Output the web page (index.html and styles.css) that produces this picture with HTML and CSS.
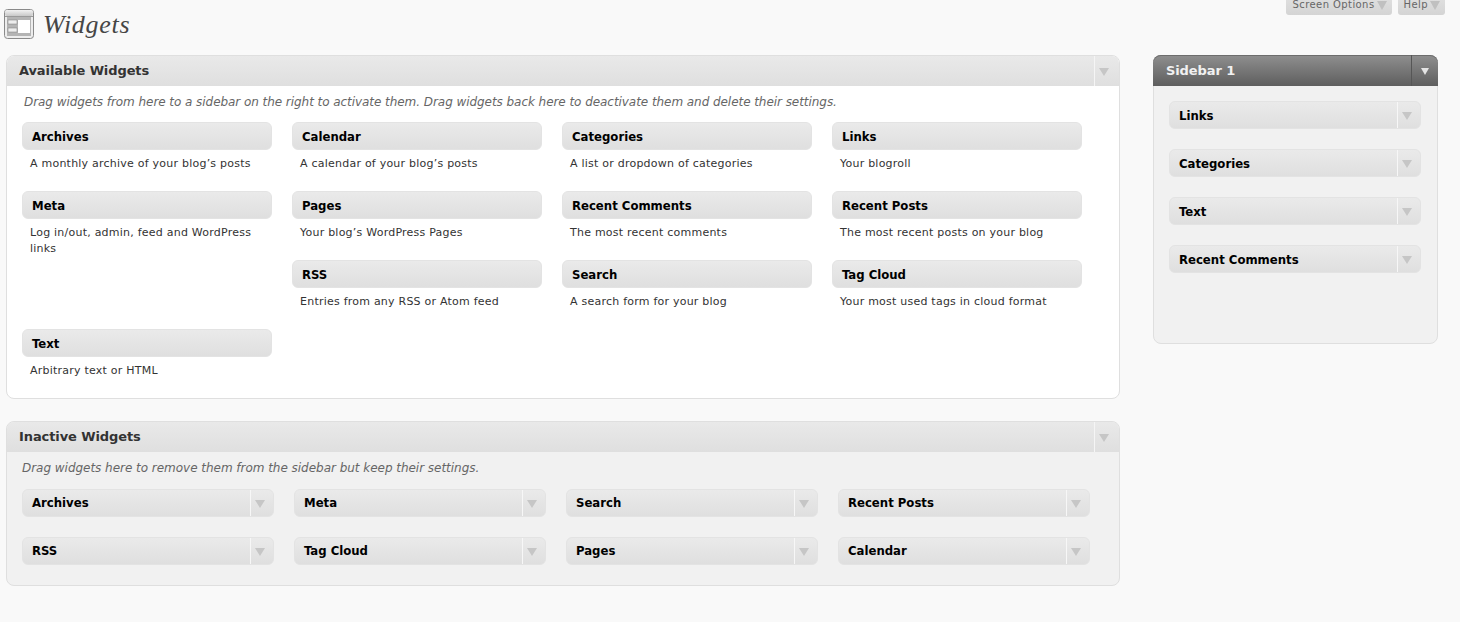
FILE: index.html
```html
<!DOCTYPE html>
<html lang="en">
<head>
<meta charset="utf-8">
<title>Widgets</title>
<link rel="stylesheet" href="styles.css">
</head>
<body>
<div class="screen-meta">
  <div class="tab">Screen Options<span class="tab-arrow"></span></div>
  <div class="tab">Help<span class="tab-arrow"></span></div>
</div>
<header class="page-head">
  <svg class="page-icon" width="30" height="30" viewBox="0 0 30 30">
    <defs>
      <linearGradient id="bar" x1="0" y1="0" x2="0" y2="1"><stop offset="0" stop-color="#f2f2f2"/><stop offset="1" stop-color="#c8c8c8"/></linearGradient>
    </defs>
    <rect x=".5" y=".5" width="29" height="29" rx="3" fill="#ededed" stroke="#8a8a8a"/>
    <rect x="1" y="1" width="28" height="6" rx="2" fill="url(#bar)"/>
    <rect x="1" y="7" width="28" height="1" fill="#9a9a9a"/>
    <rect x="3" y="8" width="24" height="19" fill="#b4b4b4"/>
    <rect x="4" y="11" width="9" height="4" fill="#ededed" stroke="#7d7d7d" stroke-width=".5"/>
    <rect x="4" y="19" width="9" height="4" fill="#ededed" stroke="#7d7d7d" stroke-width=".5"/>
    <rect x="14" y="11" width="12" height="13" fill="#fff"/>
  </svg>
  <h1 class="page-title">Widgets</h1>
</header>
<main class="layout">
  <div class="left-col">
    <section class="panel panel-available">
      <div class="panel-head"><h2 class="panel-title">Available Widgets</h2><div class="head-toggle"><span class="arrow"></span></div></div>
      <p class="panel-desc">Drag widgets from here to a sidebar on the right to activate them. Drag widgets back here to deactivate them and delete their settings.</p>
      <div class="available-grid">
        <div class="item"><div class="widget"><span class="widget-name">Archives</span></div><p class="item-desc">A monthly archive of your blog’s posts</p></div>
        <div class="item"><div class="widget"><span class="widget-name">Calendar</span></div><p class="item-desc">A calendar of your blog’s posts</p></div>
        <div class="item"><div class="widget"><span class="widget-name">Categories</span></div><p class="item-desc">A list or dropdown of categories</p></div>
        <div class="item"><div class="widget"><span class="widget-name">Links</span></div><p class="item-desc">Your blogroll</p></div>
        <div class="item"><div class="widget"><span class="widget-name">Meta</span></div><p class="item-desc">Log in/out, admin, feed and WordPress links</p></div>
        <div class="item"><div class="widget"><span class="widget-name">Pages</span></div><p class="item-desc">Your blog’s WordPress Pages</p></div>
        <div class="item"><div class="widget"><span class="widget-name">Recent Comments</span></div><p class="item-desc">The most recent comments</p></div>
        <div class="item"><div class="widget"><span class="widget-name">Recent Posts</span></div><p class="item-desc">The most recent posts on your blog</p></div>
        <div class="item item-rss"><div class="widget"><span class="widget-name">RSS</span></div><p class="item-desc">Entries from any RSS or Atom feed</p></div>
        <div class="item"><div class="widget"><span class="widget-name">Search</span></div><p class="item-desc">A search form for your blog</p></div>
        <div class="item"><div class="widget"><span class="widget-name">Tag Cloud</span></div><p class="item-desc">Your most used tags in cloud format</p></div>
        <div class="item"><div class="widget"><span class="widget-name">Text</span></div><p class="item-desc">Arbitrary text or HTML</p></div>
      </div>
    </section>
    <section class="panel panel-inactive">
      <div class="panel-head"><h2 class="panel-title">Inactive Widgets</h2><div class="head-toggle"><span class="arrow"></span></div></div>
      <p class="panel-desc inactive-desc">Drag widgets here to remove them from the sidebar but keep their settings.</p>
      <div class="inactive-grid">
        <div class="widget"><span class="widget-name">Archives</span><div class="toggle"><span class="arrow"></span></div></div>
        <div class="widget"><span class="widget-name">Meta</span><div class="toggle"><span class="arrow"></span></div></div>
        <div class="widget"><span class="widget-name">Search</span><div class="toggle"><span class="arrow"></span></div></div>
        <div class="widget"><span class="widget-name">Recent Posts</span><div class="toggle"><span class="arrow"></span></div></div>
        <div class="widget"><span class="widget-name">RSS</span><div class="toggle"><span class="arrow"></span></div></div>
        <div class="widget"><span class="widget-name">Tag Cloud</span><div class="toggle"><span class="arrow"></span></div></div>
        <div class="widget"><span class="widget-name">Pages</span><div class="toggle"><span class="arrow"></span></div></div>
        <div class="widget"><span class="widget-name">Calendar</span><div class="toggle"><span class="arrow"></span></div></div>
      </div>
    </section>
  </div>
  <aside class="panel panel-sidebar">
    <div class="panel-head head-dark"><h2 class="panel-title title-light">Sidebar 1</h2><div class="head-toggle toggle-dark"><span class="arrow arrow-light"></span></div></div>
    <div class="sidebar-list">
      <div class="widget"><span class="widget-name">Links</span><div class="toggle"><span class="arrow"></span></div></div>
      <div class="widget"><span class="widget-name">Categories</span><div class="toggle"><span class="arrow"></span></div></div>
      <div class="widget"><span class="widget-name">Text</span><div class="toggle"><span class="arrow"></span></div></div>
      <div class="widget"><span class="widget-name">Recent Comments</span><div class="toggle"><span class="arrow"></span></div></div>
    </div>
  </aside>
</main>
</body>
</html>
```
FILE: styles.css
```css
* { box-sizing: border-box; }
html, body { margin: 0; padding: 0; }
body {
  height: 622px;
  overflow: hidden;
  background: #f9f9f9;
  font-family: "DejaVu Sans", Verdana, sans-serif;
  color: #333;
}
h1, h2, p { margin: 0; }

.screen-meta {
  display: flex;
  justify-content: flex-end;
  gap: 6px;
  height: 15px;
  padding-right: 15px;
}
.tab {
  display: flex;
  align-items: flex-start;
  gap: 2px;
  height: 15px;
  padding: 0 5px 0 6px;
  font-size: 10px;
  line-height: 10px;
  color: #666;
  background: linear-gradient(#dedede, #d4d4d4);
  border-radius: 0 0 3px 3px;
  letter-spacing: .42px;
}
.tab-arrow {
  width: 0;
  height: 0;
  margin-top: 1px;
  border-left: 5px solid transparent;
  border-right: 5px solid transparent;
  border-top: 9px solid #c0c0c0;
}

.page-head {
  display: flex;
  align-items: flex-start;
  height: 40px;
  padding-left: 4px;
}
.page-icon { margin-top: -6px; flex: none; }
.page-title {
  margin-left: 9px;
  margin-top: -5px;
  font-family: "Liberation Serif", serif;
  font-style: italic;
  font-weight: 400;
  font-size: 26px;
  line-height: 30px;
  letter-spacing: .7px;
  color: #464646;
}

.layout {
  display: flex;
  align-items: flex-start;
  padding-left: 6px;
  gap: 33px;
}
.left-col {
  width: 1114px;
  display: flex;
  flex-direction: column;
  gap: 22px;
}
.panel {
  border: 1px solid #dfdfdf;
  border-radius: 8px;
  overflow: hidden;
}
.panel-available { background: #fff; height: 344px; }
.panel-inactive { background: #f1f1f1; height: 165px; }
.panel-sidebar { background: #f1f1f1; width: 285px; height: 289px; overflow: visible; }

.panel-head {
  display: flex;
  justify-content: space-between;
  height: 30px;
  background: linear-gradient(#e9e9e9, #dfdfdf);
}
.panel-title {
  padding-left: 12px;
  font-size: 13px;
  font-weight: 700;
  line-height: 30px;
  letter-spacing: -.1px;
  color: #333;
}
.head-toggle {
  display: flex;
  justify-content: center;
  align-items: center;
  width: 25px;
  padding: 2px 7px 0 0;
  border-left: 1px solid #f5f5f5;
}
.head-dark {
  background: linear-gradient(#8f8f8f, #5e5e5e);
  margin: -1px -1px 0;
  height: 31px;
  border-radius: 8px 8px 0 0;
  box-shadow: inset 0 1px 0 #6d6d6d;
}
.title-light { color: #f1f1f1; padding-left: 13px; line-height: 31px; }
.toggle-dark { border-left-color: #565656; width: 27px; padding-right: 1px; }

.arrow {
  width: 0;
  height: 0;
  border-left: 5px solid transparent;
  border-right: 5px solid transparent;
  border-top: 8px solid #c6c6c6;
}
.arrow-light { border-left-width: 4px; border-right-width: 4px; border-top: 7px solid #e4e4e4; }

.panel-desc {
  padding: 9px 0 0 17px;
  font-size: 12px;
  font-style: italic;
  line-height: 15px;
  letter-spacing: -.055px;
  color: #666;
}
.inactive-desc { padding-left: 15px; letter-spacing: -.03px; }

.widget {
  display: flex;
  justify-content: space-between;
  height: 28px;
  background: linear-gradient(#eaeaea, #dfdfdf);
  border: 1px solid #e3e3e3;
  border-radius: 6px;
}
.widget-name {
  padding-left: 9px;
  font-size: 13px;
  font-stretch: condensed;
  font-weight: 700;
  line-height: 25px;
  color: #000;
}
.toggle {
  display: flex;
  justify-content: center;
  align-items: center;
  width: 23px;
  padding: 2px 5px 0 0;
  border-left: 1px solid #f7f7f7;
}

.available-grid {
  display: grid;
  grid-template-columns: repeat(4, 250px);
  grid-auto-rows: 69px;
  column-gap: 20px;
  padding: 12px 0 0 15px;
}
.available-grid .widget-name,
.sidebar-list .widget-name { line-height: 27px; }
.item-desc {
  padding: 6px 8px 0;
  font-size: 11px;
  line-height: 16px;
  letter-spacing: .23px;
  color: #333;
}
.item-rss { grid-column: 2; }

.inactive-grid {
  display: grid;
  grid-template-columns: repeat(4, 252px);
  grid-auto-rows: 28px;
  gap: 20px;
  padding: 13px 0 0 15px;
}
.sidebar-list {
  display: flex;
  flex-direction: column;
  gap: 20px;
  padding: 15px 16px 0 15px;
}
```
